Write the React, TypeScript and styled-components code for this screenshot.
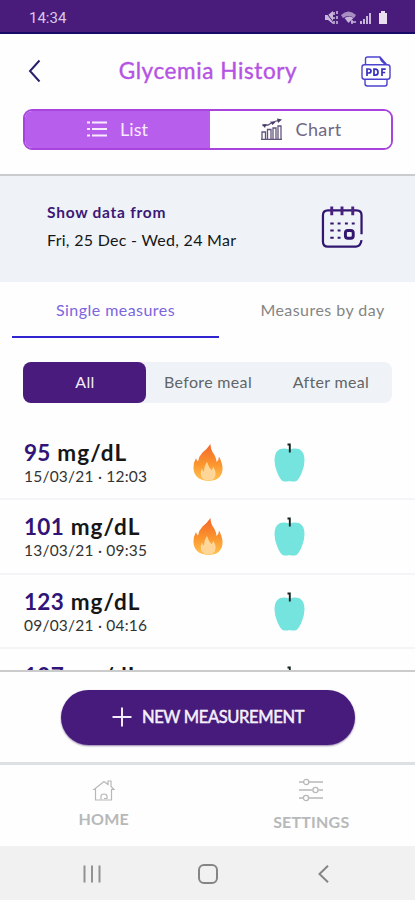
import React from "react";
import styled, { createGlobalStyle } from "styled-components";

const Global = createGlobalStyle`
  * { box-sizing: border-box; }
  body { margin: 0; background: #fff; }
  svg { display: block; flex: none; overflow: visible; }
  button { font: inherit; border: 0; background: none; padding: 0; color: inherit; letter-spacing: inherit; }
`;

const Screen = styled.div`
  width: 415px;
  height: 900px;
  display: flex;
  flex-direction: column;
  overflow: hidden;
  background: #fefefe;
  color: #161616;
  font-family: Lato, "Liberation Sans", sans-serif;
  white-space: nowrap;
`;

const StatusBar = styled.div`
  height: 34px;
  flex: none;
  padding: 3px 25px 0 29px;
  display: flex;
  align-items: center;
  justify-content: space-between;
  background: #491c7c;
  border-bottom: 2px solid #170b67;
  color: #d9c9e6;
  font: 15px Roboto, sans-serif;
`;

const Header = styled.header`
  height: 142px;
  flex: none;
  padding: 19px 23px 0 23px;
  border-bottom: 2px solid #c9cbcd;
`;

const TitleRow = styled.div`
  display: grid;
  grid-template-columns: 32px 1fr 32px;
  align-items: center;
  height: 36px;
`;

const Title = styled.h1`
  margin: 0;
  padding: 0 0 0 1px;
  text-align: center;
  font-size: 22.5px;
  line-height: 34px;
  font-weight: 400;
  letter-spacing: 0.6px;
  color: #b553e3;
  -webkit-text-stroke: 0.4px #b553e3;
`;

const ViewSwitch = styled.div`
  margin-top: 20px;
  width: 370px;
  height: 41px;
  display: grid;
  grid-template-columns: 185px 1fr;
  border: 2px solid #a943dd;
  border-radius: 9px;
  overflow: hidden;
`;

const ViewTab = styled.button<{ $active?: boolean; $spacing: number }>`
  display: flex;
  align-items: center;
  justify-content: center;
  gap: 13px;
  padding-bottom: 1px;
  padding-left: ${(p) => (p.$active ? 0 : 2)}px;
  font-size: 18px;
  letter-spacing: ${(p) => p.$spacing}px;
  color: ${(p) => (p.$active ? "#f8ebff" : "#716683")};
  background: ${(p) => (p.$active ? "#b75eed" : "#fefefe")};
`;

const DateRange = styled.section`
  height: 106px;
  flex: none;
  padding: 0 52px 5px 47px;
  display: flex;
  align-items: center;
  justify-content: space-between;
  background: #eff3f8;
`;

const RangeText = styled.div`
  padding-bottom: 1px;
  line-height: 28px;
  font-size: 16px;
  letter-spacing: 0.28px;
`;

const RangeLabel = styled.div`
  font-weight: 700;
  font-size: 15.5px;
  letter-spacing: 0.75px;
  color: #3b1875;
`;

const MeasureTabs = styled.div`
  height: 56px;
  flex: none;
  padding: 0 0 0 12px;
  display: grid;
  grid-template-columns: 207px 207px;
`;

const MeasureTab = styled.button<{ $active?: boolean }>`
  text-align: center;
  font-size: 16px;
  letter-spacing: 0.45px;
  color: ${(p) => (p.$active ? "#7b66df" : "#858585")};
  border-bottom: 2px solid ${(p) => (p.$active ? "#3024d0" : "transparent")};
`;

const Filters = styled.div`
  margin: 24px 23px 0;
  height: 41px;
  width: 369px;
  flex: none;
  display: grid;
  grid-template-columns: repeat(3, 1fr);
  border-radius: 8px;
  background: #eff3f8;
`;

const Filter = styled.button<{ $active?: boolean }>`
  border-radius: 8px;
  padding: 0 0 2px 1px;
  font-size: 16px;
  letter-spacing: 0.33px;
  color: ${(p) => (p.$active ? "#f2eafa" : "#626567")};
  background: ${(p) => (p.$active ? "#491b7c" : "transparent")};
`;

const Measurements = styled.div`
  height: 267px;
  padding-top: 23px;
  flex: none;
  overflow: hidden;
`;

const Row = styled.div`
  height: 74.4px;
  padding: 13px 0 0 24px;
  display: grid;
  grid-template-columns: 154px 60px 1fr;
  border-bottom: 2px solid #f3f5f7;
`;

const Value = styled.div`
  font-size: 22.5px;
  line-height: 27px;
  font-weight: 700;
  letter-spacing: 1.1px;
`;

const Amount = styled.span`
  color: #301477;
  letter-spacing: 0.3px;
`;

const When = styled.div`
  font-size: 15.5px;
  line-height: 21px;
  letter-spacing: 0.22px;
  color: #333;
`;

const IconCell = styled.div<{ $width: number; $top: number }>`
  display: flex;
  justify-content: center;
  width: ${(p) => p.$width}px;
  padding-top: ${(p) => p.$top}px;
`;

const ActionBar = styled.div`
  height: 95px;
  flex: none;
  display: flex;
  justify-content: center;
  padding: 18px 0 0 1px;
  border-top: 2px solid #cbcbcb;
  border-bottom: 3px solid #dde0e2;
`;

const NewButton = styled.button`
  width: 294px;
  height: 55px;
  border-radius: 28px;
  display: flex;
  align-items: center;
  justify-content: center;
  gap: 10px;
  padding-bottom: 1px;
  background: #471b7b;
  color: #f6f0fc;
  font-size: 16.5px;
  font-weight: 400;
  letter-spacing: -0.35px;
  -webkit-text-stroke: 0.5px #f6f0fc;
  box-shadow: 0 1px 2px #38136688;
`;

const BottomNav = styled.nav`
  height: 81px;
  flex: none;
  display: grid;
  grid-template-columns: 1fr 1fr;
`;

const NavItem = styled.div<{ $top: number; $gap: number }>`
  display: flex;
  flex-direction: column;
  align-items: center;
  padding-top: ${(p) => p.$top}px;
  gap: ${(p) => p.$gap}px;
  font-size: 16px;
  line-height: 20px;
  font-weight: 700;
  letter-spacing: 0.2px;
  color: #b7b8b9;
`;

const SystemNav = styled.div`
  flex: 1;
  display: grid;
  grid-template-columns: repeat(3, 116px);
  justify-content: center;
  justify-items: center;
  align-items: center;
  padding-top: 1px;
  background: #f1f1f1;
`;

const StatusIcons = () => (
  <svg width="66" height="16" viewBox="0 0 66 16" fill="#c7b5da" stroke="none">
    <path d="M1 5h3l5-4v13l-5-4H1z" />
    <path d="M1 1l9 12" stroke="#491c7c" strokeWidth="1" />
    <path d="M10 2v3M13 1v3M10 7v2M13 6v3M10 11v3M13 11v3" stroke="#c7b5da" strokeWidth="1.6" />
    <path d="M17 5q7.500-7 15 0l-2 3q-5-4-11 0z" opacity=".75" />
    <path d="M20.500 8q5-3 9 0l-5 5z" />
    <path d="M27 12h5M28 10v4" stroke="#c7b5da" fill="none" strokeWidth="1.500" />
    <path d="M36 11h2v3h-2zM39 9h2v5h-2zM42 6h2v8h-2zM45 3h2v11h-2z" />
    <path d="M55 3h2V1h4v2h2v11h-8z" fill="#e9dff0" />
  </svg>
);

const Back = () => (
  <svg width="32" height="24" viewBox="0 0 32 24" fill="none" stroke="#27216b" strokeWidth="2">
    <path d="M16.500 1.500L7 12 16.500 22.500" />
  </svg>
);

const PdfIcon = () => (
  <svg width="32" height="32" viewBox="0 0 32 32" fill="none" stroke="#4c42cf" strokeWidth="1.400">
    <path d="M5.500 9.500V4Q5.500 2 7.500 2H20L26.500 9.500M20 2.500Q21 7 26.500 9.500" />
    <rect x="2" y="9.700" width="28" height="14.600" rx="2.500" />
    <path d="M5 24.500v4q0 2.500 2.500 2.500h17.500q2 0 2-2.500v-4" />
    <path
      d="M7 21v-7h1.700q2.300 0 2.300 2t-2.300 2H7M14 14.200v6h1.200q2.800 0 2.800-3t-2.800-3zM22 21v-6.800H25.700M22 17.500H25.200"
      stroke="#382fbd"
      strokeWidth="1.700"
    />
  </svg>
);

const ListIcon = () => (
  <svg width="20" height="16" viewBox="0 0 20 16" fill="none" stroke="#f8ebff" strokeWidth="2.200">
    <path d="M0 1.500h3M5 1.500h15M0 8h3M5 8h15M0 14.500h3M5 14.500h15" />
  </svg>
);

const ChartIcon = () => (
  <svg width="21" height="22" viewBox="0 0 21 22" fill="none" stroke="#62547c" strokeWidth="1.300">
    <path d="M1 21v-7h3.500v7M6.500 21V11.500h3.500V21M12 21V10h3v11M17 21V8h3v13M0 21.300h21" />
    <path d="M1.500 7.500L7 7l5-3 7-2" strokeWidth="1.300" />
    <path d="M1 6.500l3 3.500 1.500-4zM9 3.500l2.500 3.500 3-3zM16 .5l1 4.500 4-3.500z" fill="#4b3b69" stroke="none" />
  </svg>
);

const CalendarIcon = () => (
  <svg width="42" height="42" viewBox="0 0 43 43" fill="none" stroke="#32166f" strokeWidth="2.300">
    <path d="M41.500 29V9.500Q41.500 4.500 36.500 4.500H7Q2 4.500 2 9.500V36.500Q2 41.500 7 41.500H36Q40.500 41.500 41.500 35" />
    <path d="M11 .5v9M21.500 .5v9M32.500 .5v9" stroke="#4a2181" strokeWidth="3" />
    <path
      d="M9.500 18h3.500M17 18h3M24.500 18h3M31.500 18h3M9.500 25h3.500M17 25h3M9.500 32.500h3.500M17 32.500h3"
      strokeWidth="2"
    />
    <rect x="25" y="25" width="8" height="8" rx="2.500" strokeWidth="3" />
  </svg>
);

const Flame = () => (
  <svg width="30" height="37" viewBox="0 0 30 37">
    <defs>
      <linearGradient id="flame" x1="0" y1="0" x2="0" y2="1">
        <stop offset="0" stopColor="#f4652a" />
        <stop offset=".55" stopColor="#fb962e" />
        <stop offset="1" stopColor="#ffc251" />
      </linearGradient>
    </defs>
    <path
      d="M17.500 0C17.500 4 18.500 7 21.500 11Q23.500 15 23.500 18Q26 16 26 12.500Q30 20 29.500 26Q28 37 15 37Q1 36 .5 24Q.5 18 3 14Q3.500 16.500 5 17.500Q6 12 9.500 8.500Q14 5 17.500 0Z"
      fill="url(#flame)"
    />
    <path
      d="M14 18Q15.500 23 18.500 26Q20 25 20 22.500Q24 28 22 33Q20 36.500 15 36.500Q9.500 36 8 32Q7 28 9 24.500Q9.500 27 11 27.500Q11 22 14 18Z"
      fill="#ffd697"
    />
  </svg>
);

const Apple = () => (
  <svg width="31" height="39" viewBox="0 0 31 39">
    <path
      d="M15.500 6.500Q20 4.800 25 6Q30.500 8.500 30.500 17Q30.500 23 28 29Q25.500 35.500 22.500 38Q19 39 15.500 38Q12 39 8.500 38Q5.500 35.500 3 29Q.5 23 .5 17Q.5 8.500 6 6Q11 4.800 15.500 6.500Z"
      fill="#75e4df"
    />
    <path d="M13.500 1.500h2.300v8" fill="none" stroke="#172322" strokeWidth="1.900" />
  </svg>
);

const Plus = () => (
  <svg width="20" height="20" viewBox="0 0 20 20" stroke="#f3ebf9" strokeWidth="2">
    <path d="M.5 10h19M10 .5v19" />
  </svg>
);

const HomeIcon = () => (
  <svg width="22" height="21" viewBox="0 0 22 21" fill="none" stroke="#b8b8b8" strokeWidth="1.200">
    <path d="M1 9.500L11 1.500l4 3V1h3v5.500l3 3h-2.500V20h-16V9.500z" />
    <path d="M8 19.500v-3q0-2.500 3-2.500t3 2.500v2h-3" />
  </svg>
);

const SettingsIcon = () => (
  <svg width="24" height="24" viewBox="0 0 24 24" fill="none" stroke="#b8b8b8" strokeWidth="1.300">
    <path d="M0 4h4.500M10 4h14M0 12h13.500M19.500 12H24M0 20h4M10 20h14" />
    <circle cx="7.200" cy="4" r="2.600" />
    <circle cx="16.500" cy="12" r="2.600" />
    <circle cx="7" cy="20" r="2.600" />
  </svg>
);

const RecentsIcon = () => (
  <svg width="18" height="18" viewBox="0 0 18 18" stroke="#929292" strokeWidth="2">
    <path d="M1.500 .5v17M9 .5v17M16.500 .5v17" />
  </svg>
);

const HomeKey = () => (
  <svg width="20" height="20" viewBox="0 0 20 20" fill="none" stroke="#858585" strokeWidth="2">
    <rect x="1" y="1" width="18" height="18" rx="5" />
  </svg>
);

const BackKey = () => (
  <svg width="11" height="18" viewBox="0 0 11 18" fill="none" stroke="#858585" strokeWidth="2">
    <path d="M10 .7L1.500 9 10 17.300" />
  </svg>
);

const readings = [
  { amount: "95", when: "15/03/21 · 12:03", flame: true },
  { amount: "101", when: "13/03/21 · 09:35", flame: true },
  { amount: "123", when: "09/03/21 · 04:16", flame: false },
  { amount: "107", when: "", flame: false },
];

export default function App() {
  return (
    <Screen>
      <Global />
      <StatusBar>
        <span>14:34</span>
        <StatusIcons />
      </StatusBar>
      <Header>
        <TitleRow>
          <Back />
          <Title>Glycemia History</Title>
          <PdfIcon />
        </TitleRow>
        <ViewSwitch>
          <ViewTab $active $spacing={0}>
            <ListIcon />
            List
          </ViewTab>
          <ViewTab $spacing={0.4}>
            <ChartIcon />
            Chart
          </ViewTab>
        </ViewSwitch>
      </Header>
      <DateRange>
        <RangeText>
          <RangeLabel>Show data from</RangeLabel>
          Fri, 25 Dec - Wed, 24 Mar
        </RangeText>
        <CalendarIcon />
      </DateRange>
      <MeasureTabs>
        <MeasureTab $active>Single measures</MeasureTab>
        <MeasureTab>Measures by day</MeasureTab>
      </MeasureTabs>
      <Filters>
        <Filter $active>All</Filter>
        <Filter>Before meal</Filter>
        <Filter>After meal</Filter>
      </Filters>
      <Measurements>
        {readings.map((r) => (
          <Row key={r.amount}>
            <div>
              <Value>
                <Amount>{r.amount}</Amount> mg/dL
              </Value>
              <When>{r.when}</When>
            </div>
            <IconCell $width={60} $top={5}>
              {r.flame && <Flame />}
            </IconCell>
            <IconCell $width={102} $top={4}>
              <Apple />
            </IconCell>
          </Row>
        ))}
      </Measurements>
      <ActionBar>
        <NewButton>
          <Plus />
          NEW MEASUREMENT
        </NewButton>
      </ActionBar>
      <BottomNav>
        <NavItem $top={15} $gap={8}>
          <HomeIcon />
          HOME
        </NavItem>
        <NavItem $top={13} $gap={10}>
          <SettingsIcon />
          SETTINGS
        </NavItem>
      </BottomNav>
      <SystemNav>
        <RecentsIcon />
        <HomeKey />
        <BackKey />
      </SystemNav>
    </Screen>
  );
}
